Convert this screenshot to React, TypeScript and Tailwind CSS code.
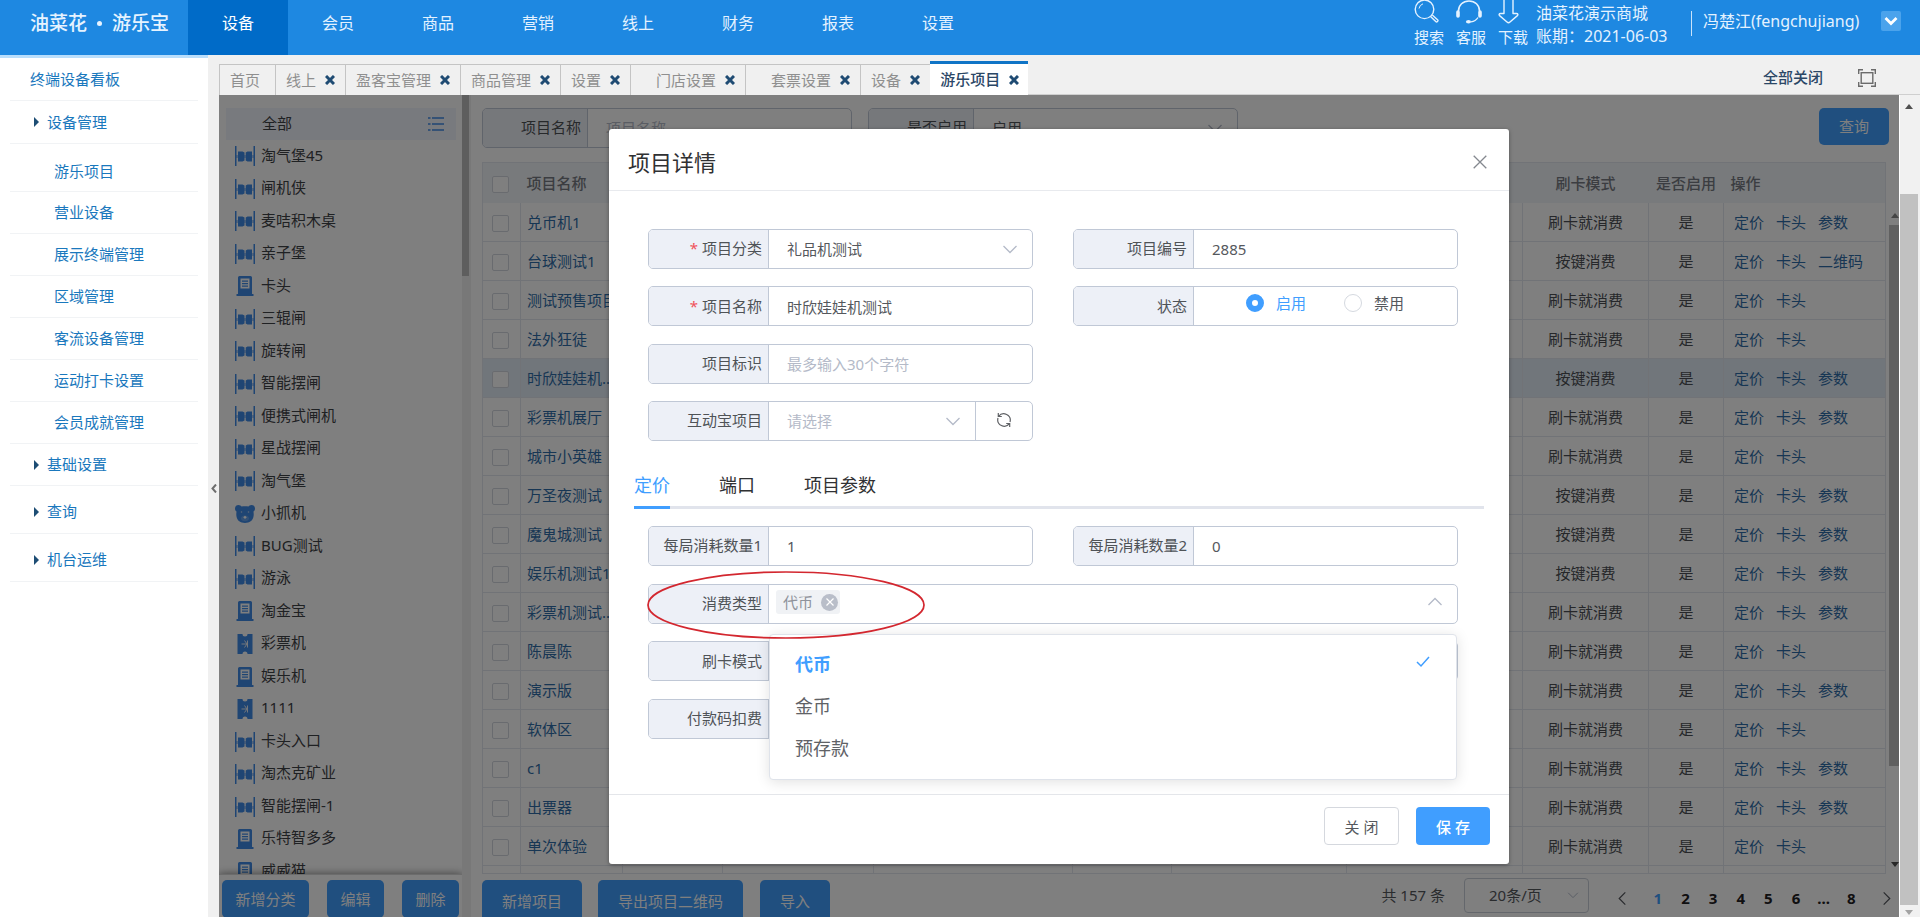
import { useState } from "react";
import type { ReactNode } from "react";

const navItems = ["设备", "会员", "商品", "营销", "线上", "财务", "报表", "设置"];

const sideItems = [
  { label: "终端设备看板", kind: "top" },
  { label: "设备管理", kind: "top" },
  { label: "游乐项目", kind: "subFirst" },
  { label: "营业设备", kind: "sub" },
  { label: "展示终端管理", kind: "sub" },
  { label: "区域管理", kind: "sub" },
  { label: "客流设备管理", kind: "sub" },
  { label: "运动打卡设置", kind: "sub" },
  { label: "会员成就管理", kind: "sub" },
  { label: "基础设置", kind: "group" },
  { label: "查询", kind: "groupTall" },
  { label: "机台运维", kind: "groupTall" },
];

const sideClass: Record<string, string> = {
  top: "h-[43px]",
  group: "h-[42px]",
  groupTall: "h-12 pt-1",
  subFirst: "h-12 pl-11 pt-2",
  sub: "h-[42px] pl-11",
};

const tabs = [
  { label: "首页", closable: false },
  { label: "线上", closable: true },
  { label: "盈客宝管理", closable: true },
  { label: "商品管理", closable: true },
  { label: "设置", closable: true },
  { label: "门店设置", closable: true, indent: true },
  { label: "套票设置", closable: true, indent: true },
  { label: "设备", closable: true },
  { label: "游乐项目", closable: true, active: true },
];

const categories: [string, string][] = [
  ["淘气堡45", "gate"],
  ["闸机侠", "gate"],
  ["麦咭积木桌", "gate"],
  ["亲子堡", "gate"],
  ["卡头", "machine"],
  ["三辊闸", "gate"],
  ["旋转闸", "gate"],
  ["智能摆闸", "gate"],
  ["便携式闸机", "gate"],
  ["星战摆闸", "gate"],
  ["淘气堡", "gate"],
  ["小抓机", "bear"],
  ["BUG测试", "gate"],
  ["游泳", "gate"],
  ["淘金宝", "machine"],
  ["彩票机", "ticket"],
  ["娱乐机", "machine"],
  ["1111", "ticket"],
  ["卡头入口", "gate"],
  ["淘杰克矿业", "gate"],
  ["智能摆闸-1", "gate"],
  ["乐特智多多", "machine"],
  ["威威猫", "machine"],
];

const SWIPE = "刷卡就消费";
const PRESS = "按键消费";
const rows: [string, string, string][] = [
  ["兑币机1", SWIPE, "参数"],
  ["台球测试1", PRESS, "二维码"],
  ["测试预售项目", SWIPE, ""],
  ["法外狂徒", SWIPE, ""],
  ["时欣娃娃机...", PRESS, "参数"],
  ["彩票机展厅", SWIPE, "参数"],
  ["城市小英雄", SWIPE, ""],
  ["万圣夜测试", PRESS, "参数"],
  ["魔鬼城测试", PRESS, "参数"],
  ["娱乐机测试1", PRESS, "参数"],
  ["彩票机测试...", SWIPE, "参数"],
  ["陈晨陈", SWIPE, ""],
  ["演示版", SWIPE, "参数"],
  ["软体区", SWIPE, ""],
  ["c1", SWIPE, "参数"],
  ["出票器", SWIPE, "参数"],
  ["单次体验", SWIPE, ""],
];

function Chevron({ dir, className }: { dir: "up" | "down" | "left" | "right"; className: string }) {
  const d = {
    up: "M1.5 11 8 4.5 14.5 11",
    down: "M1.5 5 8 11.5 14.5 5",
    left: "M11 1.5 4.5 8 11 14.5",
    right: "M5 1.5 11.5 8 5 14.5",
  }[dir];
  return (
    <svg viewBox="0 0 16 16" className={className} fill="none" stroke="currentColor" strokeWidth="1.3" aria-hidden="true">
      <path d={d} />
    </svg>
  );
}

function CategoryIcon({ kind }: { kind: string }) {
  return (
    <svg viewBox="0 0 20 20" className="size-5 shrink-0 text-[#3f8ae6]" fill="currentColor" aria-hidden="true">
      {kind === "gate" && (
        <>
          <path d="M0 0h1.5v20H0zM18.500 0H20v20h-1.500z" />
          <path d="M3 5.500h4.500l2 1v8l-2 1H3zM17 5.500h-4.500l-1.800 1v8l1.800 1H17z" />
          <path d="M1 9h18v3H1z" opacity=".45" />
        </>
      )}
      {kind === "machine" && (
        <path
          fillRule="evenodd"
          d="M4.500 0h11a1.500 1.500 0 0 1 1.500 1.500V18h1.500v2h-17v-2H3V1.500A1.500 1.500 0 0 1 4.500 0zM5.500 2.500v10h9v-10zM7 4.500h6v1.300H7zM7 7h6v1.300H7zM7 9.500h6v1.300H7z"
        />
      )}
      {kind === "ticket" && (
        <>
          <path d="M2.500 0H7.500a2.500 2.500 0 0 0 5 0h5v20h-5a2.500 2.500 0 0 0-5 0h-5z" />
          <path d="M12.500 6.500v7M6.500 10h6.500M9.500 6.500 12 10l-2.500 3.500" stroke="#e8eef6" strokeWidth="1" fill="none" />
        </>
      )}
      {kind === "bear" && (
        <>
          <path d="M0 4.500C0 2 1.700 1 3.500 1 5 1 6 1.800 6.500 2.600 8.500 2 11.500 2 13.500 2.600 14 1.800 15 1 16.500 1 18.300 1 20 2 20 4.500c0 1.800-.8 2.600-1.600 3.100.4 1.200.4 3.500.1 5C17.800 17 14.500 19 10 19s-7.800-2-8.500-6.400c-.3-1.500-.3-3.800.1-5C.8 7.100 0 6.300 0 4.500z" />
          <path d="M10 11.500c2.800 0 4 1.400 4 3s-1.500 2.800-4 2.800-4-1.200-4-2.800 1.200-3 4-3z" opacity=".2" fill="#fff" />
          <circle cx="6.500" cy="8" r=".8" fill="#b9d2f2" />
          <circle cx="13.500" cy="8" r=".8" fill="#b9d2f2" />
          <path d="m10 11.700 1.800 1.600-1.800 1.700-1.800-1.700z" fill="#fff" />
        </>
      )}
    </svg>
  );
}

function Field({
  label,
  htmlFor,
  required,
  narrow,
  children,
  className = "",
}: {
  label: string;
  htmlFor: string;
  required?: boolean;
  narrow?: boolean;
  children?: ReactNode;
  className?: string;
}) {
  return (
    <div className={`flex h-10 overflow-hidden rounded-[5px] border border-[#c0c8d6] bg-white text-[15px] ${className}`}>
      <label
        htmlFor={htmlFor}
        className={`flex shrink-0 items-center justify-end border-r border-[#c0c8d6] bg-[#edf0f7] pr-[6px] pb-[1px] text-[#4f5357] ${narrow ? "w-[105px]" : "w-[120px]"}`}
      >
        {required && <span className="mr-1 text-[#f0525a]">*</span>}
        {label}
      </label>
      {children}
    </div>
  );
}

const inputClass =
  "h-full min-w-0 flex-1 appearance-none bg-transparent px-[18px] text-[15px] text-[#55585d] outline-none placeholder:text-[#b4bac8]";
const mutedSelectClass =
  "h-full min-w-0 flex-1 appearance-none bg-transparent px-[18px] text-[15px] text-[#b4bac8] outline-none";

function SelectBox({ id, value, muted }: { id: string; value: string; muted?: boolean }) {
  return (
    <div className="relative flex min-w-0 flex-1">
      <select id={id} className={muted ? mutedSelectClass : inputClass}>
        <option>{value}</option>
      </select>
      <Chevron dir="down" className="pointer-events-none absolute top-[11px] right-[14px] size-4 text-[#b4bac8]" />
    </div>
  );
}

function Header() {
  return (
    <header className="flex h-[55px] shrink-0 items-start overflow-hidden bg-[#1e88e1] text-base text-white">
      <div className="flex w-[188px] shrink-0 items-center pt-[9px] pl-[30px] text-[19px] leading-7 font-medium text-[#e6f3ff]">
        油菜花
        <span className="mx-[10px] size-[5px] rounded-full bg-[#e6f3ff]" />
        游乐宝
      </div>
      <nav className="flex h-full">
        {navItems.map((n, i) => (
          <a
            key={n}
            href="#"
            className={`flex h-full w-[100px] justify-center pt-[11px] leading-6 ${i === 0 ? "bg-[#006bc8]" : "text-[#e4f2ff]"}`}
          >
            {n}
          </a>
        ))}
      </nav>
      <div className="ml-auto flex pr-[19px] text-[#e4f2ff]">
        <div className="flex gap-3 text-[15px] leading-5 whitespace-nowrap">
          <a href="#" className="w-[30px]">
            <svg viewBox="0 0 26 24" className="h-6 w-[26px]" fill="none" stroke="currentColor" strokeWidth="1.400" aria-hidden="true">
              <circle cx="10.500" cy="9.300" r="9.300" />
              <path d="M5 8.500A6 6 0 0 1 9 3.800" strokeWidth="1" />
              <path d="m16.500 16.500 5.500 5.200c.8.800 2.600-.8 1.800-1.700L18.300 15" />
            </svg>
            <span className="mt-[3px] block">搜索</span>
          </a>
          <a href="#" className="w-[30px]">
            <svg viewBox="0 0 26 24" className="h-6 w-[26px]" fill="none" stroke="currentColor" strokeWidth="1.600" aria-hidden="true">
              <path d="M2.500 11C2.500 5 7 1 13 1s10.500 4 10.500 10" />
              <path d="M2 12v4M24 12v4" strokeWidth="3.600" strokeLinecap="round" />
              <path d="M22 17.500c-1.500 2.500-4 4-7 4.300" strokeWidth="1.300" />
              <ellipse cx="12.500" cy="21.700" rx="2.600" ry="1.700" fill="currentColor" stroke="none" />
            </svg>
            <span className="mt-[3px] block">客服</span>
          </a>
          <a href="#" className="w-[30px]">
            <svg viewBox="0 0 22 24" className="h-6 w-[22px]" fill="none" stroke="currentColor" strokeWidth="1.400" strokeLinejoin="round" aria-hidden="true">
              <path d="M6 -2v15.500H2.500C1 13.500.8 14.800 1.600 15.600L9 22c1 .9 2 .9 3 0l7.400-6.400c.8-.8.6-2.100-.9-2.100H15V-2" />
            </svg>
            <span className="mt-[3px] block">下载</span>
          </a>
        </div>
        <div className="ml-2 w-[139px] pt-[2px] leading-[23px] whitespace-nowrap">
          <p>油菜花演示商城</p>
          <p>账期：2021-06-03</p>
        </div>
        <div className="mt-[11px] ml-4 h-[25px] w-px bg-[#c9e3fa]" />
        <div className="ml-[11px] w-[162px] pt-[9px] leading-6 whitespace-nowrap">冯楚江(fengchujiang)</div>
        <button type="button" aria-label="账户菜单" className="mt-[11px] ml-4 flex size-5 items-center justify-center rounded-xs bg-[#4ba3ec]">
          <svg viewBox="0 0 14 14" className="size-[14px]" fill="none" stroke="#fff" strokeWidth="2.800" aria-hidden="true">
            <path d="m1.500 4 5.500 5.500L12.500 4" />
          </svg>
        </button>
      </div>
    </header>
  );
}

function Sidebar() {
  return (
    <aside className="w-[208px] shrink-0 border-t-[3px] border-[#b9defc] bg-white px-[10px]">
      {sideItems.map((s, i) => {
        const arrow = i === 1 || s.kind.startsWith("group");
        return (
          <a
            key={s.label}
            href="#"
            className={`flex items-center border-b border-[#f1f3f5] text-[15px] text-[#1a78bd] ${arrow ? "pl-6" : s.kind === "top" ? "pl-5" : ""} ${sideClass[s.kind]}`}
          >
            {arrow && (
              <svg viewBox="0 0 5 10" className="mr-2 h-[10px] w-[5px]" fill="#1d4d74" aria-hidden="true">
                <path d="M0 0l5 5-5 5z" />
              </svg>
            )}
            {s.label}
          </a>
        );
      })}
    </aside>
  );
}

function TabBar() {
  return (
    <div className="flex h-10 shrink-0 items-end">
      {tabs.map((t, i) => (
        <div
          key={t.label}
          className={
            t.active
              ? "flex h-[34px] items-center border-t-[3px] border-[#0f74c6] bg-white pr-[9px] pl-[10px] text-[15px] font-medium text-[#2b4766]"
              : `flex h-[31px] items-center border-t border-l border-[#c4c4c4] pr-[10px] text-[15px] text-[#8f8f8f] ${t.indent ? "pl-[25px]" : i === 0 ? "pr-[15px] pl-[10px]" : "pl-[10px]"}`
          }
        >
          <a href="#">{t.label}</a>
          {t.closable && (
            <button type="button" aria-label={`关闭${t.label}`} className="ml-[9px]">
              <svg viewBox="0 0 10 10" className="size-[10px]" fill="none" stroke="#1f4b73" strokeWidth="3" aria-hidden="true">
                <path d="m1 1 8 8M9 1 1 9" />
              </svg>
            </button>
          )}
        </div>
      ))}
      <div className="flex h-[34px] flex-1 items-center justify-end border-b border-[#cfcfcf] pr-11 text-[15px] font-medium text-[#2b4766]">
        <button type="button">全部关闭</button>
        <button type="button" aria-label="全屏" className="ml-[35px]">
          <svg viewBox="0 0 18 18" className="size-[18px]" fill="none" stroke="#6b6b6b" strokeWidth="1.400" aria-hidden="true">
            <path d="M.7 5V.7H5M13 .7h4.300V5M17.300 13v4.300H13M5 17.300H.7V13" />
            <rect x="3.200" y="3.700" width="11.600" height="10.600" />
          </svg>
        </button>
      </div>
    </div>
  );
}

const primary = "flex shrink-0 items-center justify-center rounded-[5px] bg-[#409eff] text-[15px] text-white";

function CategoryPanel() {
  return (
    <div className="flex w-[252px] shrink-0">
      <div className="flex min-w-0 flex-1 flex-col">
        <div className="min-h-0 flex-1 overflow-hidden pt-[13px] pr-[6px] pl-[7px] text-[15px] text-[#3f4246]">
          <div className="flex h-8 items-center justify-between bg-[#f0f5fc] pr-3 pb-[1px] pl-9">
            全部
            <svg viewBox="0 0 16 14" className="h-[14px] w-4" stroke="#3f8ae6" strokeWidth="1.500" fill="none" aria-hidden="true">
              <path d="M0 1h2.500M4 1h12M0 7h2.500M4 7h12M0 13h2.500M4 13h12" />
            </svg>
          </div>
          <ul className="flex h-[748px] flex-col">
            {categories.map(([name, kind]) => (
              <li key={name} className="flex flex-1 items-center gap-[6px] pl-[9px]">
                <CategoryIcon kind={kind} />
                <span className="pb-[3px]">{name}</span>
              </li>
            ))}
          </ul>
        </div>
        <div className="flex h-[43px] shrink-0 items-start justify-between border-t border-[#d8d8d8] px-[3px] pt-[5px] shadow-[0_0_8px_rgba(0,0,0,0.5)]">
          <button type="button" className={`${primary} h-[38px] w-[87px]`}>新增分类</button>
          <button type="button" className={`${primary} h-[38px] w-[57px]`}>编辑</button>
          <button type="button" className={`${primary} h-[38px] w-[57px]`}>删除</button>
        </div>
      </div>
      <div className="w-[9px] shrink-0 bg-[#f1f1f1] pr-[2px]">
        <div className="h-[181px] bg-[#bdbdbd]" />
      </div>
    </div>
  );
}

function ProjectTable() {
  const cell = "border-r border-b border-[#e2e6ee]";
  const box = "mt-[3px] block size-[17px] appearance-none rounded-xs border border-[#d3d7df] bg-white";
  return (
    <table className="w-full table-fixed border-collapse border border-[#e2e6ee] text-[15px] whitespace-nowrap">
      <colgroup>
        <col className="w-[38px]" />
        <col className="w-[102px]" />
        <col className="w-[100px]" />
        <col className="w-[151px]" />
        <col className="w-[199px]" />
        <col className="w-[99px]" />
        <col className="w-[175px]" />
        <col />
        <col className="w-[126px]" />
        <col className="w-[75px]" />
        <col className="w-[162px]" />
      </colgroup>
      <thead>
        <tr className="h-10 bg-[#f1f4f9] text-[#777b82]">
          <th className="pl-[9px]">
            <input type="checkbox" aria-label="全选" className={box} />
          </th>
          <th className="px-[6px] text-left font-medium">项目名称</th>
          <th colSpan={6} />
          <th className="font-medium">刷卡模式</th>
          <th className="font-medium">是否启用</th>
          <th className="px-[7px] text-left font-medium">操作</th>
        </tr>
      </thead>
      <tbody className="text-[#4c4f54]">
        {rows.map(([name, mode, extra], i) => (
          <tr key={name} className={`h-[39px] ${i === 4 ? "bg-[#e2edf7]" : ""}`}>
            <td className={`${cell} pl-[9px]`}>
              <input type="checkbox" aria-label={name} className={box} />
            </td>
            <td className={`${cell} overflow-hidden px-[6px] text-[#2f6da8]`}>{name}</td>
            <td className={cell} />
            <td className={cell} />
            <td className={cell} />
            <td className={cell} />
            <td className={cell} />
            <td className={cell} />
            <td className={`${cell} text-center`}>{mode}</td>
            <td className={`${cell} text-center`}>是</td>
            <td className={`${cell} px-[10px]`}>
              <div className="flex gap-3 text-[#2f6da8]">
                <a href="#">定价</a>
                <a href="#">卡头</a>
                {extra && <a href="#">{extra}</a>}
              </div>
            </td>
          </tr>
        ))}
        <tr className="h-[39px]">
          {Array.from({ length: 11 }, (_, i) => (
            <td key={i} className={cell} />
          ))}
        </tr>
      </tbody>
    </table>
  );
}

function Triangle({ up, className }: { up?: boolean; className: string }) {
  return (
    <svg viewBox="0 0 8 5" className={`h-[5px] w-2 shrink-0 ${className}`} fill="currentColor" aria-hidden="true">
      <path d={up ? "M0 5 4 0l4 5z" : "M0 0h8L4 5z"} />
    </svg>
  );
}

function MainPanel() {
  return (
    <div className="flex min-w-0 flex-1 flex-col pl-[11px]">
      <div className="flex shrink-0 items-start gap-4 pt-[13px] pr-[10px]">
        <Field label="项目名称" htmlFor="q-name" narrow className="w-[370px]">
          <input id="q-name" placeholder="项目名称" className={inputClass} />
        </Field>
        <Field label="是否启用" htmlFor="q-on" narrow className="w-[370px]">
          <SelectBox id="q-on" value="启用" />
        </Field>
        <button type="button" className={`${primary} ml-auto h-[37px] w-[70px]`}>查询</button>
      </div>
      <div className="mt-[14px] flex min-h-0 flex-1">
        <div className="min-w-0 flex-1 overflow-hidden border-b border-[#e2e6ee]">
          <ProjectTable />
        </div>
        <div className="flex w-[13px] shrink-0 flex-col items-end pt-[51px] pl-[3px]">
          <Triangle up className="text-[#8b8b8b]" />
          <div className="mt-[7px] w-full flex-1 bg-[#c1c1c1]" />
          <Triangle className="mt-24 mb-[7px] text-[#505050]" />
        </div>
      </div>
      <div className="flex h-[43px] shrink-0 items-start overflow-hidden pt-[6px] text-[15px]">
        <button type="button" className={`${primary} h-[42px] w-[100px]`}>新增项目</button>
        <button type="button" className={`${primary} ml-4 h-[42px] w-[145px]`}>导出项目二维码</button>
        <button type="button" className={`${primary} ml-[17px] h-[42px] w-[70px]`}>导入</button>
        <div className="ml-auto flex h-[30px] items-center pr-[5px] text-[#55585d]">
          <span>共 157 条</span>
          <div className="relative ml-[19px]">
            <select aria-label="每页条数" className="h-[35px] w-[125px] appearance-none rounded-[4px] border border-[#c9ced8] bg-white pl-6">
              <option>20条/页</option>
            </select>
            <Chevron dir="down" className="pointer-events-none absolute top-[11px] right-[10px] size-3 text-[#b4bac8]" />
          </div>
          <div className="mt-[6px] ml-[26px] flex items-center">
            <button type="button" aria-label="上一页">
              <Chevron dir="left" className="size-[15px]" />
            </button>
            <div className="mx-[14px] flex w-[221px] font-bold text-[#1f2023]">
              {["1", "2", "3", "4", "5", "6", "...", "8"].map((p) => (
                <button key={p} type="button" className={p === "1" ? "flex-1 text-[#409eff]" : "flex-1"}>
                  {p}
                </button>
              ))}
            </div>
            <button type="button" aria-label="下一页">
              <Chevron dir="right" className="size-[15px]" />
            </button>
          </div>
        </div>
      </div>
    </div>
  );
}

const consumeTypes = ["代币", "金币", "预存款"];

function Dialog() {
  const [status, setStatus] = useState("on");
  const radio =
    "size-[18px] appearance-none rounded-full border border-[#d5d9e0] bg-white checked:border-[6px] checked:border-[#409eff]";
  return (
    <section
      role="dialog"
      aria-labelledby="dlg-title"
      className="flex h-[735px] w-[900px] flex-col rounded-[3px] bg-white shadow-[0_1px_4px_rgba(0,0,0,0.35)]"
    >
      <div className="flex h-[62px] shrink-0 items-center justify-between border-b border-[#e8eaee] pt-1 pr-[22px] pl-[19px]">
        <h2 id="dlg-title" className="text-[22px] leading-8 text-[#303133]">项目详情</h2>
        <button type="button" aria-label="关闭对话框">
          <svg viewBox="0 0 14 14" className="size-[14px]" fill="none" stroke="#84888f" strokeWidth="1.300" aria-hidden="true">
            <path d="m.7.7 12.600 12.600M13.300.7.7 13.300" />
          </svg>
        </button>
      </div>

      <div className="flex-1 px-[25px]">
        <div className="mx-[14px] mt-[38px] grid h-[212px] grid-cols-2 content-between gap-x-10 pr-3">
          <Field label="项目分类" htmlFor="f-cat" required>
            <SelectBox id="f-cat" value="礼品机测试" />
          </Field>
          <Field label="项目编号" htmlFor="f-no">
            <input id="f-no" defaultValue="2885" className={inputClass} />
          </Field>
          <Field label="项目名称" htmlFor="f-name" required>
            <input id="f-name" defaultValue="时欣娃娃机测试" className={inputClass} />
          </Field>
          <Field label="状态" htmlFor="f-on">
            <div className="flex items-center gap-[38px] pb-[6px] pl-[52px] text-[#55585d]">
              <label className={`flex items-center gap-3 ${status === "on" ? "text-[#409eff]" : ""}`}>
                <input id="f-on" type="radio" name="status" checked={status === "on"} onChange={() => setStatus("on")} className={radio} />
                启用
              </label>
              <label className={`flex items-center gap-3 ${status === "off" ? "text-[#409eff]" : ""}`}>
                <input type="radio" name="status" checked={status === "off"} onChange={() => setStatus("off")} className={radio} />
                禁用
              </label>
            </div>
          </Field>
          <Field label="项目标识" htmlFor="f-tag" className="col-start-1">
            <input id="f-tag" placeholder="最多输入30个字符" className={inputClass} />
          </Field>
          <Field label="互动宝项目" htmlFor="f-hdb" className="col-start-1">
            <SelectBox id="f-hdb" value="请选择" muted />
            <button type="button" aria-label="刷新" className="flex w-[57px] items-center justify-center border-l border-[#c0c8d6] pb-[2px]">
              <svg viewBox="0 0 16 16" className="size-4" fill="none" stroke="#606266" strokeWidth="1.200" aria-hidden="true">
                <path d="M2.300 1v3.500h3.500M2.600 4.300A6.500 6.500 0 0 1 14 10M13.700 15v-3.500h-3.500M13.400 11.700A6.500 6.500 0 0 1 2 6" />
              </svg>
            </button>
          </Field>
        </div>

        <div role="tablist" className="mt-[29px] flex h-[39px] gap-[49px] border-b-[3px] border-[#e1e4ec] text-lg leading-[30px] text-[#303133]">
          <button type="button" role="tab" aria-selected="true" className="h-[39px] border-b-[3px] border-[#409eff] pb-[6px] text-[#409eff]">
            定价
          </button>
          <button type="button" role="tab" className="pb-[6px]">端口</button>
          <button type="button" role="tab" className="pb-[6px]">项目参数</button>
        </div>

        <div className="mx-[14px] mt-[17px] grid h-[213px] grid-cols-2 content-between gap-x-10 pr-3">
          <Field label="每局消耗数量1" htmlFor="f-n1">
            <input id="f-n1" defaultValue="1" className={inputClass} />
          </Field>
          <Field label="每局消耗数量2" htmlFor="f-n2">
            <input id="f-n2" defaultValue="0" className={inputClass} />
          </Field>
          <div className="relative col-span-2">
            <Field label="消费类型" htmlFor="f-type">
              <div className="flex flex-1 items-center justify-between pr-[14px] pb-[3px] pl-[7px]">
                <span className="flex h-6 items-center gap-2 rounded-[3px] bg-[#f0f2f5] pr-[2px] pl-[7px] text-[#8f939b]">
                  代币
                  <button type="button" aria-label="移除代币" className="flex size-[17px] items-center justify-center rounded-full bg-[#b9bec9]">
                    <svg viewBox="0 0 8 8" className="size-2" stroke="#fff" strokeWidth="1.200" aria-hidden="true">
                      <path d="m.5.5 7 7M7.500.5l-7 7" />
                    </svg>
                  </button>
                </span>
                <button id="f-type" type="button" aria-label="收起选项" aria-expanded="true">
                  <Chevron dir="up" className="size-4 text-[#b4bac8]" />
                </button>
              </div>
            </Field>
            <ul
              role="listbox"
              aria-label="消费类型"
              className="absolute top-[50px] right-[1px] left-[121px] z-10 h-[146px] rounded-[4px] border border-[#dfe3ea] bg-white py-2 text-lg text-[#606266] shadow-[0_2px_14px_rgba(0,0,0,0.12)]"
            >
              {consumeTypes.map((c, i) => (
                <li
                  key={c}
                  role="option"
                  aria-selected={i === 0}
                  className={`flex h-[42px] items-center justify-between pr-[26px] pl-[25px] ${i === 0 ? "font-bold text-[#409eff]" : ""}`}
                >
                  {c}
                  {i === 0 && (
                    <svg viewBox="0 0 14 12" className="mb-1 h-3 w-[14px]" fill="none" stroke="currentColor" strokeWidth="1.500" aria-hidden="true">
                      <path d="M1 6l4 4 8-9" />
                    </svg>
                  )}
                </li>
              ))}
            </ul>
            <svg viewBox="0 0 278 68" className="pointer-events-none absolute -top-[13px] -left-px z-20 h-[68px] w-[278px]" fill="none" stroke="#d3272f" strokeWidth="1.700" aria-hidden="true">
              <ellipse cx="139" cy="34" rx="138" ry="33" />
            </svg>
          </div>
          <Field label="刷卡模式" htmlFor="f-mode" className="col-span-2">
            <select id="f-mode" className={inputClass} />
          </Field>
          <Field label="付款码扣费" htmlFor="f-pay">
            <select id="f-pay" className={inputClass} />
          </Field>
        </div>
      </div>

      <div className="flex h-[70px] shrink-0 items-start justify-end gap-[17px] border-t border-[#e4e6ea] pt-3 pr-[19px] text-[15px]">
        <button type="button" className="h-[38px] w-[75px] rounded-[4px] border border-[#d5d8de] pt-[2px] text-[#55585d]">关 闭</button>
        <button type="button" className="h-[38px] w-[74px] rounded-[4px] bg-[#409eff] pt-[2px] font-medium text-white">保 存</button>
      </div>
    </section>
  );
}

export default function App() {
  return (
    <div className="flex h-screen flex-col overflow-hidden bg-[#f0f0f0] font-['Noto_Sans','Noto_Sans_CJK_SC',sans-serif]">
      <Header />
      <div className="flex min-h-0 flex-1">
        <Sidebar />
        <button type="button" aria-label="收起侧栏" className="flex w-[11px] shrink-0 items-center justify-center pt-[5px] text-[#6d6d6d]">
          <svg viewBox="0 0 6 9" className="h-[9px] w-[6px]" fill="none" stroke="currentColor" strokeWidth="2" aria-hidden="true">
            <path d="M5 .5 1.500 4.500 5 8.500" />
          </svg>
        </button>
        <div className="flex min-w-0 flex-1 flex-col">
          <TabBar />
          <div className="flex min-h-0 flex-1">
            <main className="relative flex min-w-0 flex-1 overflow-hidden bg-white">
              <CategoryPanel />
              <MainPanel />
              <div className="absolute inset-0 z-10 flex items-start justify-center bg-black/50 pt-[34px]">
                <Dialog />
              </div>
            </main>
            <div className="flex w-[21px] shrink-0 flex-col items-center border-l border-white bg-[#f1f1f1] pr-[2px] pt-[9px] pb-[2px]">
              <Triangle up className="text-[#505050]" />
              <div className="mt-[85px] mb-[5px] w-[18px] flex-1 bg-[#c1c1c1]" />
              <Triangle className="text-[#a3a3a3]" />
            </div>
          </div>
        </div>
      </div>
    </div>
  );
}
